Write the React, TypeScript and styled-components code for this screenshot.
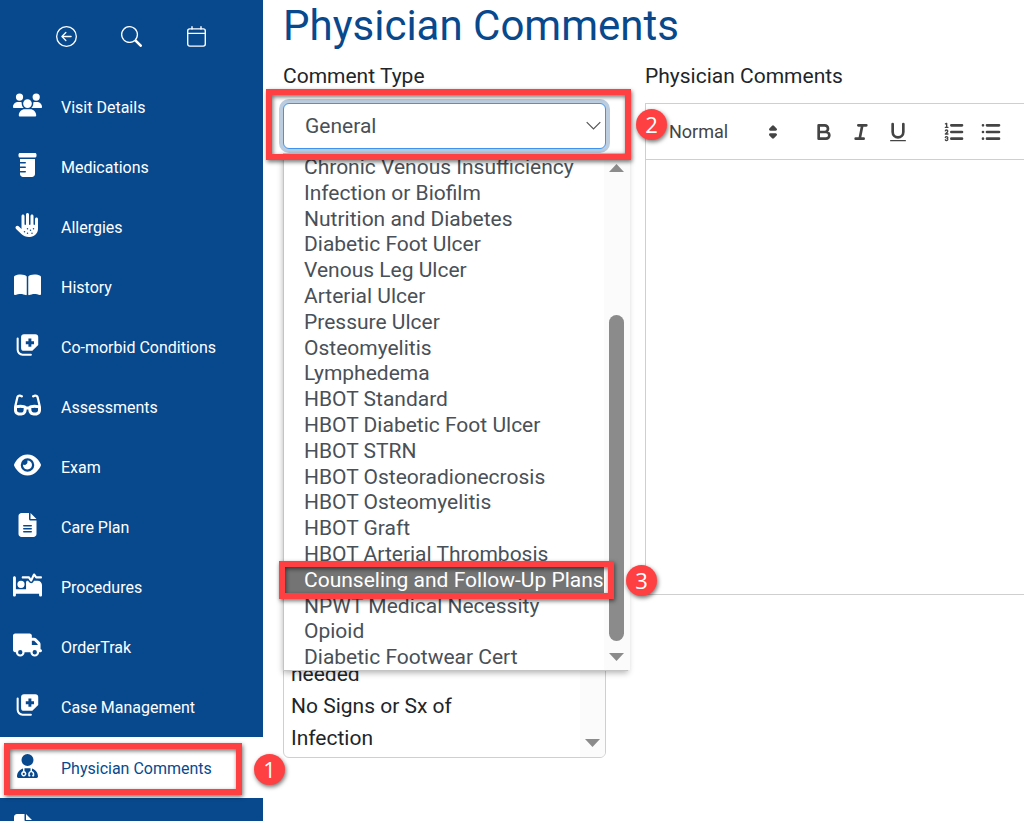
import React from 'react';
import styled, { createGlobalStyle, css } from 'styled-components';
import {
  FaUsers,
  FaPrescriptionBottle,
  FaHandDots,
  FaBookOpen,
  FaGlasses,
  FaEye,
  FaFileLines,
  FaBedPulse,
  FaTruck,
  FaUserDoctor,
  FaFilePen,
} from 'react-icons/fa6';
import { BsArrowLeftCircle, BsSearch } from 'react-icons/bs';

const navy = '#08498e';
const alert = '#fe4043';
const rule = '#cfcfcf';

const GlobalStyle = createGlobalStyle`
  *, *::before, *::after { box-sizing: border-box; }
  body {
    margin: 0;
    background: #fff;
    color: #212529;
    font-family: Roboto, "Liberation Sans", sans-serif;
    font-size: 21px;
  }
  button, select { font: inherit; color: inherit; }
`;

const Page = styled.div`
  display: flex;
  height: 100vh;
  overflow: hidden;
`;

const Sidebar = styled.aside`
  flex: 0 0 263px;
  background: ${navy};
  color: #fff;
`;

const QuickActions = styled.div`
  display: flex;
  justify-content: space-between;
  padding: 26px 56px 30px;
`;

const QuickButton = styled.button`
  display: flex;
  width: 21px;
  height: 21px;
  padding: 0;
  border: 0;
  background: none;
  color: #fff;
  svg { width: 21px; height: 21px; }
`;

const NavList = styled.ul`
  margin: 0;
  padding: 0;
  list-style: none;
`;

const NavItem = styled.li`
  position: relative;
`;

const NavLink = styled.a<{ $active?: boolean }>`
  display: flex;
  align-items: center;
  gap: 18px;
  height: ${(p) => (p.$active ? 61 : 60)}px;
  padding-left: 12px;
  background: ${(p) => (p.$active ? '#fff' : 'transparent')};
  color: ${(p) => (p.$active ? navy : '#fff')};
  font-size: 16px;
  text-decoration: none;
`;

const NavIcon = styled.span`
  display: flex;
  justify-content: center;
  width: 31px;
  padding-bottom: 4px;
  svg { flex: none; width: 29px; height: 24px; }
`;

const NavLabel = styled.span`
  padding-top: 1px;
`;

const Main = styled.main`
  flex: 1;
  min-width: 0;
  padding-left: 20px;
`;

const Title = styled.h1`
  margin: 0 0 9px;
  color: ${navy};
  font-size: 42px;
  font-weight: 400;
  line-height: 52px;
`;

const Columns = styled.div`
  display: grid;
  grid-template-columns: 323px minmax(0, 1fr);
  column-gap: 39px;
`;

const Field = styled.section`
  display: flex;
  flex-direction: column;
`;

const labelStyle = css`
  margin: 0 0 12px;
  font-size: 21px;
  font-weight: 400;
  line-height: 30px;
`;

const FieldLabel = styled.label`${labelStyle}`;
const FieldHeading = styled.h2`${labelStyle}`;

const SelectWrap = styled.div`
  position: relative;
  color: #495057;
`;

const TypeSelect = styled.select`
  display: block;
  width: 100%;
  height: 46px;
  padding: 0 36px 0 21px;
  border: 1px solid #3f94f0;
  border-radius: 6px;
  background: #fff;
  box-shadow: 0 0 0 4px #bccde0;
  appearance: none;
  outline: none;
`;

const Chevron = styled.svg`
  position: absolute;
  top: 18px;
  right: 5px;
  width: 15px;
  height: 10px;
  pointer-events: none;
`;

const Menu = styled.div`
  position: absolute;
  top: 50px;
  left: 0;
  z-index: 2;
  display: flex;
  width: 345px;
  height: 518px;
  background: #fff;
  border: 1px solid #c4c4c4;
  box-shadow: 0 2px 6px rgba(0, 0, 0, 0.3);
`;

const Options = styled.ul`
  display: flex;
  flex: 1;
  flex-direction: column;
  margin: 0;
  padding: 0;
  list-style: none;
`;

const Option = styled.li<{ $selected?: boolean }>`
  flex: 1;
  padding-left: 20px;
  line-height: 27px;
  min-height: 0;
  white-space: nowrap;
  background: ${(p) => (p.$selected ? '#747474' : 'transparent')};
  color: ${(p) => (p.$selected ? '#fff' : 'inherit')};
`;

const ScrollTrack = styled.div`
  display: flex;
  flex: 0 0 26px;
  flex-direction: column;
  align-items: center;
  justify-content: space-between;
  padding: 10px 0 9px;
  background: #fbfbfb;
`;

const ScrollThumb = styled.div`
  width: 15px;
  height: 326px;
  margin: auto 0 12px;
  border-radius: 8px;
  background: #8b8b8b;
`;

const ScrollArrow = styled.svg`
  display: block;
  width: 15px;
  height: 8px;
  fill: #8b8b8b;
`;

const Phrases = styled.div`
  display: flex;
  justify-content: space-between;
  height: 577px;
  margin-top: 32px;
  border: 1px solid ${rule};
  border-radius: 6px;
  overflow: hidden;
`;

const PhraseList = styled.ul`
  align-self: flex-end;
  width: 200px;
  margin: 0;
  padding: 0 0 3px 7px;
  list-style: none;
  line-height: 32px;
`;

const PhraseTrack = styled.div`
  display: flex;
  flex: 0 0 25px;
  align-items: flex-end;
  justify-content: center;
  padding-bottom: 10px;
  background: #fbfbfb;
`;

const Editor = styled.div`
  border: 1px solid ${rule};
  border-right: 0;
`;

const Toolbar = styled.div`
  display: flex;
  align-items: center;
  height: 56px;
  padding-left: 23px;
  border-bottom: 1px solid ${rule};
  color: #444;
`;

const FormatPicker = styled.label`
  display: flex;
  align-items: center;
  width: 116px;
  height: 32px;
  margin-right: 27px;
  select {
    flex: 1;
    width: 92px;
    padding: 0;
    border: 0;
    background: none;
    font-size: 18px;
    appearance: none;
  }
`;

const ToolGroup = styled.div`
  display: flex;
  gap: 13px;
  margin-right: 32px;
`;

const Tool = styled.button`
  display: flex;
  width: 24px;
  height: 24px;
  padding: 0;
  border: 0;
  background: none;
`;

const Glyph = styled.svg`
  flex: none;
  width: 24px;
  height: 24px;
  fill: none;
  stroke: #444;
  stroke-width: 2;
  stroke-linecap: round;
  stroke-linejoin: round;
  .thin { stroke-width: 1; }
  .solid { fill: #444; }
  .fill { fill: #444; stroke: none; }
`;

const EditorBody = styled.div`
  height: 434px;
  outline: none;
`;

const Frame = styled.div<{ $top: number; $left: number; $width: number; $height: number }>`
  position: absolute;
  z-index: 3;
  top: ${(p) => p.$top}px;
  left: ${(p) => p.$left}px;
  width: ${(p) => p.$width}px;
  height: ${(p) => p.$height}px;
  border: 6px solid ${alert};
  filter: drop-shadow(1px 2px 2px rgba(0, 0, 0, 0.55));
  pointer-events: none;
`;

const Badge = styled.span<{ $top: number; $left: number }>`
  position: absolute;
  z-index: 4;
  top: ${(p) => p.$top}px;
  left: ${(p) => p.$left}px;
  width: 31px;
  height: 31px;
  border-radius: 50%;
  background: ${alert};
  box-shadow: 1px 2px 4px rgba(0, 0, 0, 0.55);
  color: #fff;
  font: 22px/30px "Open Sans", sans-serif;
  text-align: center;
`;

const CalendarIcon = () => (
  <svg viewBox="0 0 21 21" fill="none" stroke="currentColor" strokeWidth="1.4" strokeLinecap="round">
    <rect x="1.7" y="2.9" width="17.6" height="17.2" rx="2" />
    <path d="M1.7 7.400H19.300M6 .8V3M15 .8V3" />
  </svg>
);

const CardsPlusIcon = () => (
  <svg viewBox="-0.700 -0.700 24.500 24.500" fill="none">
    <path
      fill="currentColor"
      fillRule="evenodd"
      d="M8 .5H19.5A3 3 0 0 1 22.5 3.500V11.500L16.500 17.500H8A3 3 0 0 1 5 14.500V3.500A3 3 0 0 1 8 .5ZM12.500 5V7.700H9.800V10.700H12.500V13.400H15.500V10.700H18.200V7.700H15.500V5Z"
    />
    <path d="M1.500 5V16.500A5 5 0 0 0 6.500 21.500H15" stroke="currentColor" strokeWidth="2.1" strokeLinecap="round" />
  </svg>
);

const UpArrow = () => (
  <ScrollArrow viewBox="0 0 15 8"><path d="M7.500 0 15 8H0Z" /></ScrollArrow>
);
const DownArrow = () => (
  <ScrollArrow viewBox="0 0 15 8"><path d="M0 0H15L7.500 8Z" /></ScrollArrow>
);

const navItems = [
  { label: 'Visit Details', icon: <FaUsers /> },
  { label: 'Medications', icon: <FaPrescriptionBottle /> },
  { label: 'Allergies', icon: <FaHandDots /> },
  { label: 'History', icon: <FaBookOpen /> },
  { label: 'Co-morbid Conditions', icon: <CardsPlusIcon /> },
  { label: 'Assessments', icon: <FaGlasses /> },
  { label: 'Exam', icon: <FaEye /> },
  { label: 'Care Plan', icon: <FaFileLines /> },
  { label: 'Procedures', icon: <FaBedPulse /> },
  { label: 'OrderTrak', icon: <FaTruck /> },
  { label: 'Case Management', icon: <CardsPlusIcon /> },
  { label: 'Physician Comments', icon: <FaUserDoctor />, active: true },
];

const commentTypes = [
  'Chronic Venous Insufficiency',
  'Infection or Biofilm',
  'Nutrition and Diabetes',
  'Diabetic Foot Ulcer',
  'Venous Leg Ulcer',
  'Arterial Ulcer',
  'Pressure Ulcer',
  'Osteomyelitis',
  'Lymphedema',
  'HBOT Standard',
  'HBOT Diabetic Foot Ulcer',
  'HBOT STRN',
  'HBOT Osteoradionecrosis',
  'HBOT Osteomyelitis',
  'HBOT Graft',
  'HBOT Arterial Thrombosis',
  'Counseling and Follow-Up Plans',
  'NPWT Medical Necessity',
  'Opioid',
  'Diabetic Footwear Cert',
];

const highlighted = 'Counseling and Follow-Up Plans';

export default function App() {
  return (
    <>
      <GlobalStyle />
      <Page>
        <Sidebar>
          <QuickActions>
            <QuickButton aria-label="Back"><BsArrowLeftCircle /></QuickButton>
            <QuickButton aria-label="Search"><BsSearch /></QuickButton>
            <QuickButton aria-label="Calendar"><CalendarIcon /></QuickButton>
          </QuickActions>
          <nav>
            <NavList>
              {navItems.map((item) => (
                <NavItem key={item.label}>
                  <NavLink href="#" $active={item.active}>
                    <NavIcon>{item.icon}</NavIcon>
                    <NavLabel>{item.label}</NavLabel>
                  </NavLink>
                  {item.active && (
                    <>
                      <Frame $top={6} $left={4} $width={238} $height={52} />
                      <Badge $top={17} $left={254}>1</Badge>
                    </>
                  )}
                </NavItem>
              ))}
              <NavItem>
                <NavLink href="#" aria-label="Documents">
                  <NavIcon><FaFilePen /></NavIcon>
                </NavLink>
              </NavItem>
            </NavList>
          </nav>
        </Sidebar>

        <Main>
          <Title>Physician Comments</Title>
          <Columns>
            <Field>
              <FieldLabel htmlFor="comment-type">Comment Type</FieldLabel>
              <SelectWrap>
                <TypeSelect id="comment-type" defaultValue="General">
                  <option>General</option>
                </TypeSelect>
                <Chevron viewBox="0 0 15 10" fill="none" stroke="#555" strokeWidth="1.2">
                  <path d="M.7 1.200 7.500 8 14.300 1.200" />
                </Chevron>
                <Menu>
                  <Options role="listbox" aria-label="Comment types">
                    {commentTypes.map((type) => (
                      <Option
                        key={type}
                        role="option"
                        aria-selected={type === highlighted}
                        $selected={type === highlighted}
                      >
                        {type}
                      </Option>
                    ))}
                  </Options>
                  <ScrollTrack>
                    <UpArrow />
                    <ScrollThumb />
                    <DownArrow />
                  </ScrollTrack>
                </Menu>
                <Frame $top={-14} $left={-17} $width={365} $height={71} />
                <Badge $top={6} $left={353}>2</Badge>
                <Frame $top={458} $left={-4} $width={335} $height={38} />
                <Badge $top={462} $left={343}>3</Badge>
              </SelectWrap>
              <Phrases>
                <PhraseList>
                  <li>needed</li>
                  <li>No Signs or Sx of Infection</li>
                </PhraseList>
                <PhraseTrack><DownArrow /></PhraseTrack>
              </Phrases>
            </Field>

            <Field>
              <FieldHeading id="editor-label">Physician Comments</FieldHeading>
              <Editor>
                <Toolbar role="toolbar" aria-label="Formatting">
                  <FormatPicker>
                    <select aria-label="Text style" defaultValue="Normal">
                      <option>Normal</option>
                    </select>
                    <Glyph viewBox="0 0 18 18">
                      <path className="solid" d="M7 11 9 13 11 11ZM7 7 9 5 11 7Z" />
                    </Glyph>
                  </FormatPicker>
                  <ToolGroup>
                    <Tool aria-label="Bold">
                      <Glyph viewBox="0 0 18 18">
                        <path d="M5 4H9.500A2.500 2.500 0 0 1 9.500 9H5ZM5 9H10.500A2.500 2.500 0 0 1 10.500 14H5Z" />
                      </Glyph>
                    </Tool>
                    <Tool aria-label="Italic">
                      <Glyph viewBox="0 0 18 18"><path d="M7 4H13M5 14H11M8 14 10 4" /></Glyph>
                    </Tool>
                    <Tool aria-label="Underline">
                      <Glyph viewBox="0 0 18 18">
                        <path d="M5 3V9A4 4 0 0 0 13 9V3" />
                        <rect className="fill" x="3" y="15" width="12" height="1" rx="0.5" />
                      </Glyph>
                    </Tool>
                  </ToolGroup>
                  <ToolGroup>
                    <Tool aria-label="Numbered list">
                      <Glyph viewBox="0 0 18 18">
                        <path d="M7 4H15M7 9H15M7 14H15" />
                        <path className="thin" d="M2.500 5.500H4.500M2.600 2.900 3.500 2.500V5.500M4.500 10.500h-2c0-.234 1.850-1.076 1.850-2.234A.959.959 0 0 0 2.500 8.156M2.500 14.846a.959.959 0 0 0 1.850-.109A.7.7 0 0 0 3.750 14a.688.688 0 0 0 .6-.736.959.959 0 0 0-1.850-.109" />
                      </Glyph>
                    </Tool>
                    <Tool aria-label="Bulleted list">
                      <Glyph viewBox="0 0 18 18">
                        <path d="M6 4H15M6 9H15M6 14H15" />
                        <path d="M3 4H3M3 9H3M3 14H3" />
                      </Glyph>
                    </Tool>
                  </ToolGroup>
                </Toolbar>
                <EditorBody contentEditable role="textbox" aria-labelledby="editor-label" />
              </Editor>
            </Field>
          </Columns>
        </Main>
      </Page>
    </>
  );
}
